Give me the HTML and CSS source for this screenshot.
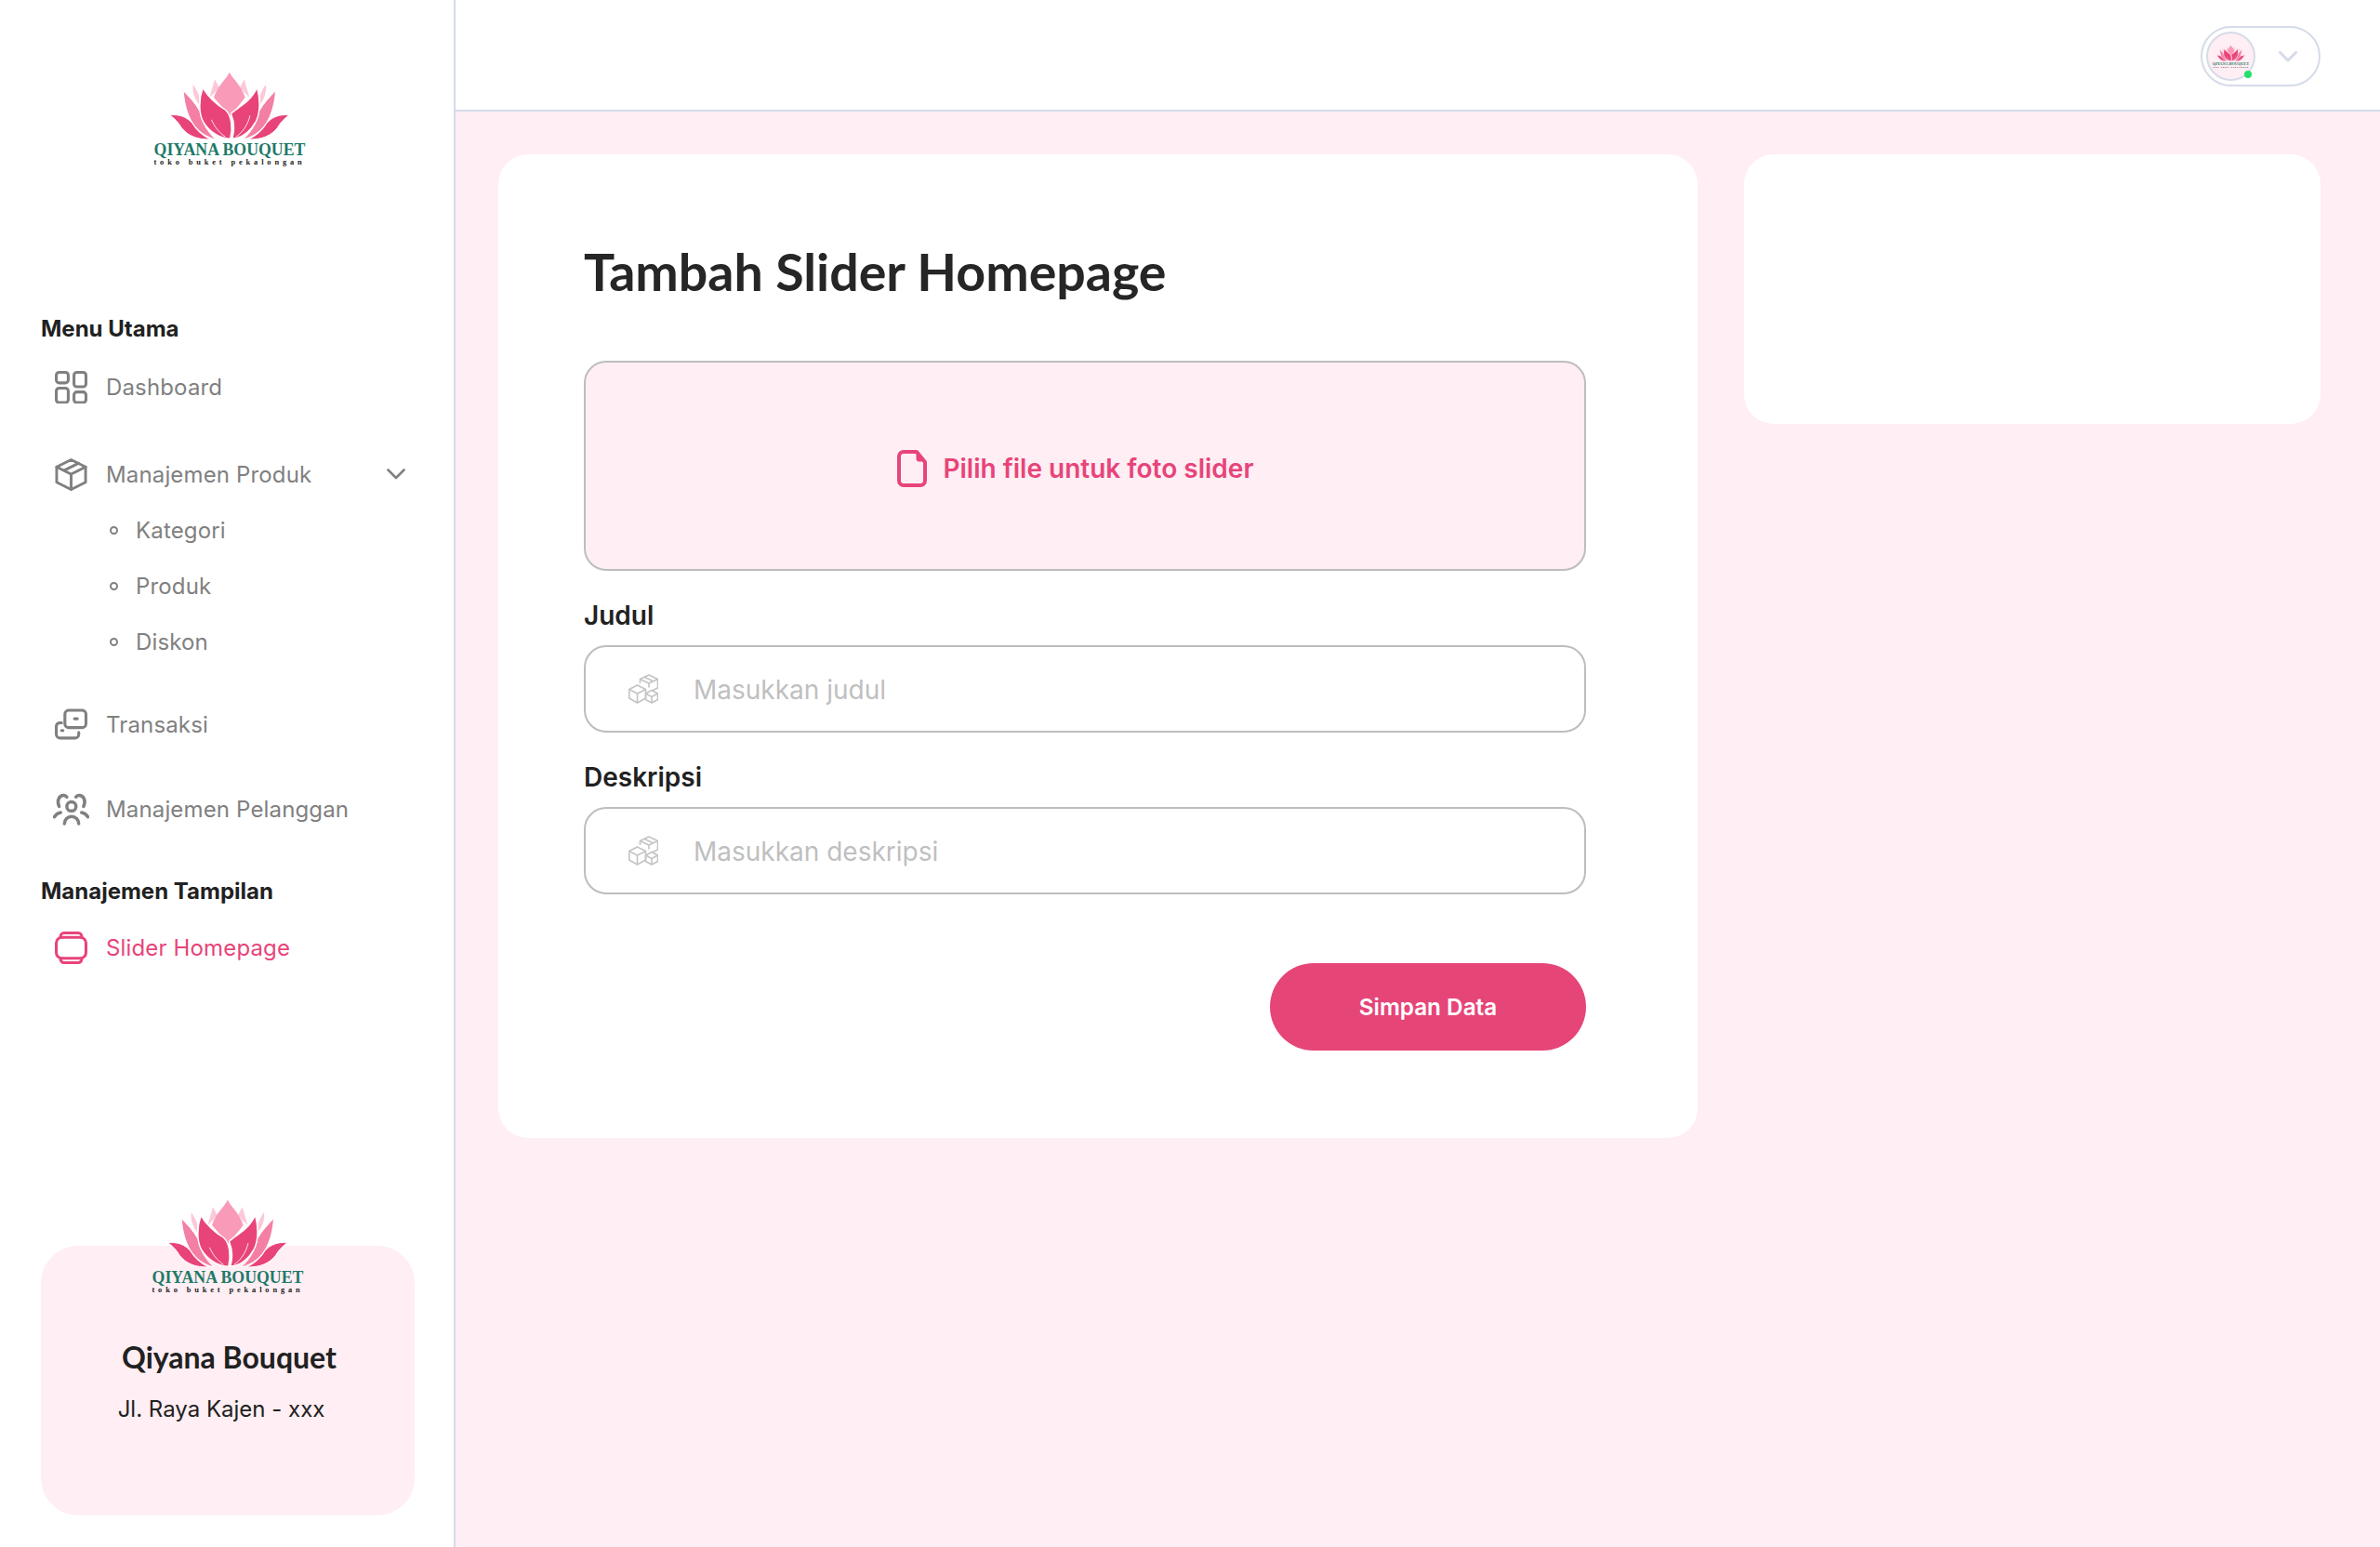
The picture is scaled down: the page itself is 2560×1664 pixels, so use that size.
FILE: index.html
```html
<html>
    <head>
        <title>Qiyana Bouquet - Tambah Slider Homepage</title>
        <link rel="stylesheet" href="styles.css">
    </head>

    <body>
        <!-- shared lotus drawing, used by every logo on the page -->
        <svg class="defs" aria-hidden="true">
            <symbol id="lotusHalf" viewBox="150 80 395 230">
                <path fill="#fbc9d8" d="M228 125C225 150 233 172 248 190L247 160C241 146 236 135 228 125Z"/>
                <path fill="#fbc9d8" d="M299 108L282 166L298 152L313 134Z"/>
                <path fill="#f47fa4" stroke="#fff" stroke-width="3" d="M196 145C215 165 236 186 250 212C256 250 278 282 302 304C252 292 204 252 196 145Z"/>
                <path fill="#e8447a" stroke="#fff" stroke-width="3" d="M152 225C182 220 210 232 226 252C240 276 260 292 284 304C242 306 210 292 190 266C178 246 166 235 152 225Z"/>
            </symbol>
            <symbol id="lotus" viewBox="150 80 395 230">
                <use href="#lotusHalf" x="150" y="80" width="395" height="230"/>
                <g transform="translate(694 0) scale(-1 1)">
                    <use href="#lotusHalf" x="150" y="80" width="395" height="230"/>
                </g>
                <path fill="#f99bb8" d="M347 85C335 110 306 130 296 168L349 228L398 168C388 130 360 110 347 85Z"/>
                <path fill="#e8447a" stroke="#fff" stroke-width="4" d="M260 136C278 166 304 190 334 208C354 226 358 268 350 302C318 300 282 282 261 246C245 216 248 170 260 136Z"/>
                <path fill="#e8447a" stroke="#fff" stroke-width="4" d="M437 134C447 170 449 216 433 246C412 282 384 300 356 302C366 268 362 244 352 220C372 200 418 182 437 134Z"/>
                <path fill="none" stroke="#fff" stroke-width="2.5" d="M288 240C298 262 312 282 334 296M414 226C408 254 392 280 368 296"/>
            </symbol>
        </svg>

        <div class="layout">
            <aside class="sidebar">
                <div class="logo logo-top">
                    <svg class="lotus"><use href="#lotus"/></svg>
                    <span class="logo-name">QIYANA BOUQUET</span>
                    <span class="logo-tag">toko buket pekalongan</span>
                </div>

                <p class="menu-title menu-title-first">Menu Utama</p>
                <a class="nav-item nav-dashboard">
                    <svg class="nav-icon" viewBox="0 0 34 34">
                        <rect x="1.5" y="1.5" width="12.5" height="11" rx="3"/>
                        <rect x="20" y="1.5" width="12.5" height="15" rx="3"/>
                        <rect x="1.5" y="18" width="12.5" height="15" rx="3"/>
                        <rect x="20" y="22" width="12.5" height="11" rx="3"/>
                    </svg>
                    Dashboard
                </a>
                <a class="nav-item nav-produk">
                    <svg class="nav-icon" viewBox="0 0 36 36">
                        <path d="M18 1.5L34 9.5V26.500L18 34.500L2 26.500V9.500Z"/>
                        <path d="M2 9.500L18 17.500L34 9.500M18 17.500V34.500M10 13.500L26 5.500"/>
                    </svg>
                    Manajemen Produk
                    <svg class="nav-chevron" viewBox="0 0 20 12"><path d="M1.5 1.5L10 10L18.5 1.5"/></svg>
                </a>
                <div class="submenu">
                    <a class="sub-item"><span class="bullet"></span>Kategori</a>
                    <a class="sub-item"><span class="bullet"></span>Produk</a>
                    <a class="sub-item"><span class="bullet"></span>Diskon</a>
                </div>
                <a class="nav-item nav-transaksi">
                    <svg class="nav-icon" viewBox="0 0 34 34">
                        <rect x="10.500" y="2" width="22" height="18" rx="4"/>
                        <path d="M20.500 10.800H23.500"/>
                        <path d="M7 15H5A4 4 0 0 0 1.500 19V27A4 4 0 0 0 5.500 31H21A4 4 0 0 0 25 27V25"/>
                        <path d="M7 23H8.500"/>
                    </svg>
                    Transaksi
                </a>
                <a class="nav-item nav-pelanggan">
                    <svg class="nav-icon nav-icon-wide" viewBox="0 0 38 34">
                        <circle cx="19.300" cy="14" r="4.800"/>
                        <path d="M12 32A7.500 7.500 0 0 1 27 32"/>
                        <path d="M6.500 14C3.500 8 6.500 2.500 11 2.500C12.500 2.500 13.500 3 14.500 4"/>
                        <path d="M32 14C35 8 32 2.500 27.500 2.500C26 2.500 25 3 24 4"/>
                        <path d="M1.500 25A9 9 0 0 1 8 20.500M36.500 25A9 9 0 0 0 30 20.500"/>
                    </svg>
                    Manajemen Pelanggan
                </a>

                <p class="menu-title">Manajemen Tampilan</p>
                <a class="nav-item nav-active">
                    <svg class="nav-icon" viewBox="0 0 34 34">
                        <rect x="1.500" y="6" width="31" height="22" rx="6"/>
                        <path d="M6 6V5A3.500 3.500 0 0 1 9.500 1.500H24.500A3.500 3.500 0 0 1 28 5V6M6 28V29A3.500 3.500 0 0 0 9.500 32.500H24.500A3.500 3.500 0 0 0 28 29V28"/>
                    </svg>
                    Slider Homepage
                </a>

                <div class="store-card">
                    <div class="logo logo-card">
                        <svg class="lotus"><use href="#lotus"/></svg>
                        <span class="logo-name">QIYANA BOUQUET</span>
                        <span class="logo-tag">toko buket pekalongan</span>
                    </div>
                    <h3 class="store-name">Qiyana Bouquet</h3>
                    <p class="store-address">Jl. Raya Kajen - xxx</p>
                </div>
            </aside>

            <div class="content">
                <header class="topbar">
                    <div class="profile-pill">
                        <div class="avatar">
                            <div class="logo logo-avatar">
                                <svg class="lotus"><use href="#lotus"/></svg>
                                <span class="logo-name">QIYANA BOUQUET</span>
                                <span class="logo-tag">toko buket pekalongan</span>
                            </div>
                            <span class="online-dot"></span>
                        </div>
                        <svg class="pill-chevron" viewBox="0 0 20 12"><path d="M1.5 1.5L10 10L18.5 1.5"/></svg>
                    </div>
                </header>

                <main class="page">
                    <section class="card form-card">
                        <h1 class="form-title">Tambah Slider Homepage</h1>

                        <form class="slider-form">
                            <label class="upload-box">
                                <svg class="file-icon" viewBox="0 0 32 40">
                                    <path d="M7 2H21L30 13V33A5 5 0 0 1 25 38H7A5 5 0 0 1 2 33V7A5 5 0 0 1 7 2Z"/>
                                    <path class="file-fold" d="M21 3V10A2 2 0 0 0 23 12H29Z"/>
                                </svg>
                                Pilih file untuk foto slider
                            </label>

                            <p class="field-label field-label-first">Judul</p>
                            <div class="field">
                                <svg class="cube-icon" viewBox="0 0 32 32">
                                    <path d="M12.500 10V5.500L22 1L31.500 5.500V15L25 18"/>
                                    <path d="M12.500 5.500L22 10L31.500 5.500M22 10V14.500M17 3.300L26.500 7.800"/>
                                    <path d="M0.800 16.500L9.500 12L18.500 16.500V26L9.500 31L0.800 26Z"/>
                                    <path d="M0.800 16.500L9.500 21L18.500 16.500M9.500 21V31"/>
                                    <path d="M18.500 21L25 17.500L31.500 21V27.500L25 31L18.500 27.500Z"/>
                                    <path d="M18.500 21L25 24.500L31.500 21M25 24.500V31"/>
                                </svg>
                                <input class="field-input" type="text" placeholder="Masukkan judul">
                            </div>

                            <p class="field-label">Deskripsi</p>
                            <div class="field">
                                <svg class="cube-icon" viewBox="0 0 32 32">
                                    <path d="M12.500 10V5.500L22 1L31.500 5.500V15L25 18"/>
                                    <path d="M12.500 5.500L22 10L31.500 5.500M22 10V14.500M17 3.300L26.500 7.800"/>
                                    <path d="M0.800 16.500L9.500 12L18.500 16.500V26L9.500 31L0.800 26Z"/>
                                    <path d="M0.800 16.500L9.500 21L18.500 16.500M9.500 21V31"/>
                                    <path d="M18.500 21L25 17.500L31.500 21V27.500L25 31L18.500 27.500Z"/>
                                    <path d="M18.500 21L25 24.500L31.500 21M25 24.500V31"/>
                                </svg>
                                <input class="field-input" type="text" placeholder="Masukkan deskripsi">
                            </div>

                            <div class="form-actions">
                                <button class="save-button" type="button">Simpan Data</button>
                            </div>
                        </form>
                    </section>

                    <section class="card side-card"></section>
                </main>
            </div>
        </div>
    </body>
</html>
```

FILE: styles.css
```css
/* Page base */
* {
    box-sizing: border-box;
}

body {
    margin: 0;
    background-color: #ffeef3;
    color: #212121;
    font-family: "Inter", "Liberation Sans", sans-serif;
}

.defs {
    display: none;
}

.layout {
    display: flex;
    height: 1664px;
}

/* Logo, sized in em so that each copy scales from its font-size */
.logo {
    display: flex;
    flex-direction: column;
    align-items: center;
    width: 8.3em;
    font-size: 20px;
    font-family: "Liberation Serif", serif;
    font-weight: 700;
    line-height: 1;
}

.lotus {
    display: block;
    width: 6.5em;
    height: 3.8em;
}

.logo-name {
    margin-top: 0.06em;
    color: #1f7a68;
    font-size: 0.89em;
    white-space: nowrap;
}

.logo-tag {
    color: #222;
    font-size: 0.42em;
    letter-spacing: 0.46em;
    white-space: nowrap;
}

.logo-top {
    margin: 76px 0 0 164px;
}

/* Sidebar */
.sidebar {
    display: flex;
    flex-direction: column;
    flex: 0 0 490px;
    background-color: #fff;
    border-right: 2px solid #d5dbe8;
}

.menu-title {
    margin: 0 0 15px 44px;
    height: 30px;
    font-size: 24px;
    font-weight: 700;
    line-height: 30px;
}

.menu-title-first {
    margin-top: 160px;
    margin-bottom: 17px;
}

.nav-item {
    display: flex;
    align-items: center;
    height: 60px;
    padding-left: 59px;
    color: #808080;
    font-size: 24px;
    letter-spacing: 0.15px;
}

.nav-dashboard {
    margin-bottom: 34px;
}

.nav-transaksi {
    margin: 29px 0 31px;
}

.nav-pelanggan {
    margin-bottom: 44px;
}

.nav-active {
    color: #e8447a;
}

/* Sidebar icons */
.nav-icon {
    flex: none;
    width: 35px;
    height: 35px;
    margin-right: 20px;
    fill: none;
    stroke: currentColor;
    stroke-width: 3;
    stroke-linecap: round;
    stroke-linejoin: round;
}

.nav-icon-wide {
    width: 39px;
    margin-left: -2px;
    margin-right: 18px;
    stroke-width: 3.4;
}

.nav-chevron {
    width: 20px;
    height: 12px;
    margin-left: auto;
    margin-right: 52px;
    fill: none;
    stroke: currentColor;
    stroke-width: 2.6;
    stroke-linecap: round;
    stroke-linejoin: round;
}

/* Sub menu */
.sub-item {
    display: flex;
    align-items: center;
    height: 60px;
    padding-left: 118px;
    color: #808080;
    font-size: 24px;
    letter-spacing: 0.15px;
}

.bullet {
    width: 9px;
    height: 9px;
    margin-right: 19px;
    border: 2px solid #808080;
    border-radius: 50%;
}

/* Store card at the bottom of the sidebar */
.store-card {
    display: flex;
    flex-direction: column;
    align-items: center;
    height: 290px;
    margin: auto 42px 34px 44px;
    background-color: #ffeef3;
    border-radius: 40px;
}

.logo-card {
    margin-top: -51px;
}

.store-name {
    margin: 48px 0 0 3px;
    font-family: "Lato", sans-serif;
    font-size: 32px;
    font-weight: 700;
    line-height: 40px;
}

.store-address {
    margin: 21px 14px 0 0;
    font-size: 24px;
    line-height: 30px;
}

/* Top bar */
.content {
    flex: 1;
    min-width: 0;
}

.topbar {
    display: flex;
    justify-content: flex-end;
    align-items: center;
    height: 120px;
    padding: 3px 64px 0 0;
    background-color: #fff;
    border-bottom: 2px solid #d5dbe8;
}

.profile-pill {
    display: flex;
    align-items: center;
    width: 129px;
    height: 65px;
    padding-left: 4px;
    border: 2px solid #d5dbe8;
    border-radius: 33px;
}

.avatar {
    position: relative;
    display: flex;
    justify-content: center;
    align-items: center;
    flex: none;
    width: 53px;
    height: 53px;
    background-color: #ffeef3;
    border: 2px solid #d5dbe8;
    border-radius: 50%;
}

.logo-avatar {
    font-size: 4.8px;
}

.online-dot {
    position: absolute;
    right: 2px;
    bottom: 1px;
    width: 8px;
    height: 8px;
    background-color: #22e06a;
    border-radius: 50%;
}

.pill-chevron {
    width: 20px;
    height: 12px;
    margin-left: 25px;
    fill: none;
    stroke: #d5dbe8;
    stroke-width: 3;
    stroke-linecap: round;
    stroke-linejoin: round;
}

/* Main section */
.page {
    display: flex;
    align-items: flex-start;
    gap: 50px;
    padding: 46px 64px 0 46px;
}

.card {
    background-color: #fff;
    border-radius: 32px;
}

.form-card {
    flex: 0 0 1290px;
    height: 1058px;
    padding: 92px 120px 0 92px;
}

.side-card {
    flex: 0 0 620px;
    height: 290px;
}

.form-title {
    margin: 0 0 62px;
    color: #262626;
    font-family: "Lato", sans-serif;
    font-size: 55.500px;
    font-weight: 700;
    line-height: 68px;
}

/* Upload box */
.upload-box {
    display: flex;
    justify-content: center;
    align-items: center;
    gap: 17px;
    height: 226px;
    padding: 6px 20px 0 0;
    color: #e8447a;
    font-size: 28px;
    font-weight: 600;
    background-color: #ffeef3;
    border: 2px solid #bdbdbd;
    border-radius: 24px;
}

.file-icon {
    width: 32px;
    height: 40px;
    fill: none;
    stroke: #e8447a;
    stroke-width: 4;
    stroke-linejoin: round;
}

.file-fold {
    fill: #e8447a;
    stroke-width: 1;
}

/* Form fields */
.field-label {
    margin: 32px 0 16px;
    height: 32px;
    font-size: 28px;
    font-weight: 600;
    line-height: 32px;
}

.field {
    display: flex;
    align-items: center;
    height: 94px;
    padding-left: 46px;
    background-color: #fff;
    border: 2px solid #bdbdbd;
    border-radius: 24px;
}

.cube-icon {
    flex: none;
    width: 32px;
    height: 32px;
    margin-right: 38px;
    fill: none;
    stroke: #c4c4c4;
    stroke-width: 1.6;
    stroke-linejoin: round;
}

.field-input {
    flex: 1;
    min-width: 0;
    padding: 2px 0 0;
    border: none;
    outline: none;
    color: #212121;
    font-family: inherit;
    font-size: 28px;
    background: transparent;
}

.field-input::placeholder {
    color: #bfbfbf;
}

/* Save button */
.form-actions {
    display: flex;
    justify-content: flex-end;
    margin-top: 74px;
}

.save-button {
    width: 340px;
    height: 94px;
    border: none;
    border-radius: 47px;
    color: #fff;
    font-family: inherit;
    font-size: 24.300px;
    font-weight: 600;
    background-color: #e64578;
}
```
